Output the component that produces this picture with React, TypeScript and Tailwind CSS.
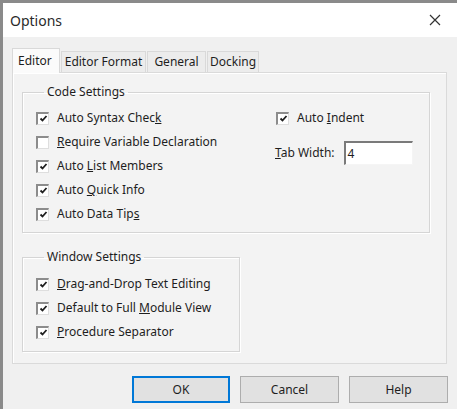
import React from "react";

const Check = ({ checked = true }: { checked?: boolean }) => (
  <span className="w-[13px] h-[13px] shrink-0 bg-white border-t-2 border-l-2 border-r border-b border-t-[#8c8c8c] border-l-[#8c8c8c] border-r-[#dedede] border-b-[#dedede] flex items-center justify-center">
    {checked && (
      <svg width="9" height="9" viewBox="0 0 9 9">
        <path d="M1.5 4.5 L3.5 6.5 L7.5 2" stroke="#1e1e1e" strokeWidth="1.8" fill="none" />
      </svg>
    )}
  </span>
);

const Row = ({ children, checked = true }: { children: React.ReactNode; checked?: boolean }) => (
  <div className="flex items-center gap-[8px] h-[24px]">
    <Check checked={checked} />
    <span className="whitespace-nowrap">{children}</span>
  </div>
);

const Btn = ({ label, primary }: { label: string; primary?: boolean }) => (
  <button
    className={
      primary
        ? "w-[98px] h-[27px] bg-[#e1e1e1] border border-[#0078d7] shadow-[inset_0_0_0_1px_#0078d7] text-[12px]"
        : "w-[99px] h-[27px] bg-[#e1e1e1] border border-[#adadad] text-[12px]"
    }
  >
    {label}
  </button>
);

export default function App() {
  return (
    <div
      className="w-[457px] h-[409px] overflow-hidden bg-[#f0f0f0] border-t-[3px] border-l-[3px] border-[#8a8a8a] text-[12px] text-[#1e1e1e] flex flex-col"
      style={{ fontFamily: '"Noto Sans", "Open Sans", sans-serif' }}
    >
      <div className="h-[34px] bg-white flex items-center justify-between pl-[7px] pr-[16px] shrink-0">
        <span className="text-[14px] text-[#2a2a2a]">Options</span>
        <svg width="12" height="12" viewBox="0 0 12 12">
          <path d="M1 1 L11 11 M11 1 L1 11" stroke="#333" strokeWidth="1.2" />
        </svg>
      </div>
      <div className="pl-[9px] pt-[11px] flex flex-col">
        <div className="flex items-end">
          <div className="h-[25px] w-[48px] px-[5px] flex items-center bg-[#fbfbfb] border border-b-0 border-[#d9d9d9] -mb-px relative z-10">
            Editor
          </div>
          <div className="h-[21px] w-[85px] ml-px flex items-center justify-center bg-[#ececec] border border-b-0 border-[#d9d9d9] whitespace-nowrap">
            Editor Format
          </div>
          <div className="h-[21px] w-[59px] ml-px flex items-center justify-center bg-[#ececec] border border-b-0 border-[#d9d9d9]">
            General
          </div>
          <div className="h-[21px] w-[52px] ml-px flex items-center justify-center bg-[#ececec] border border-b-0 border-[#d9d9d9]">
            Docking
          </div>
        </div>
        <div className="w-[435px] h-[292px] bg-[#f3f3f3] border border-[#dadada] shadow-[inset_1px_1px_0_#ffffff] pt-[11px] pl-[9px]">
          <fieldset className="w-[408px] border border-[#d5d5d5] shadow-[inset_1px_1px_0_#ffffff,1px_1px_0_#ffffff] pl-[13px] pr-[10px] pb-[6px]">
            <legend className="ml-[8px] px-[3px] leading-[16px]">Code Settings</legend>
            <div className="flex pt-[6px]">
              <div className="w-[240px] flex flex-col">
                <Row>
                  Auto Syntax Chec<u>k</u>
                </Row>
                <Row checked={false}>
                  <u>R</u>equire Variable Declaration
                </Row>
                <Row>
                  Auto <u>L</u>ist Members
                </Row>
                <Row>
                  Auto <u>Q</u>uick Info
                </Row>
                <Row>
                  Auto Data Tip<u>s</u>
                </Row>
              </div>
              <div className="flex flex-col">
                <Row>
                  Auto <u>I</u>ndent
                </Row>
                <div className="flex items-center mt-[11px] -ml-px">
                  <span className="whitespace-nowrap">
                    <u>T</u>ab Width:
                  </span>
                  <div className="ml-[9px] w-[69px] h-[24px] bg-white border-t-2 border-l-2 border-r border-b border-t-[#7a7a7a] border-l-[#7a7a7a] border-r-[#f5f5f5] border-b-[#f5f5f5] flex items-center pl-[2px]">
                    4
                  </div>
                </div>
              </div>
            </div>
          </fieldset>
          <fieldset className="w-[218px] mt-[16px] border border-[#d5d5d5] shadow-[inset_1px_1px_0_#ffffff,1px_1px_0_#ffffff] pl-[13px] pb-[7px]">
            <legend className="ml-[8px] px-[3px] leading-[16px]">Window Settings</legend>
            <div className="flex flex-col pt-[7px]">
              <Row>
                <u>D</u>rag-and-Drop Text Editing
              </Row>
              <Row>
                Default to Full <u>M</u>odule View
              </Row>
              <Row>
                <u>P</u>rocedure Separator
              </Row>
            </div>
          </fieldset>
        </div>
        <div className="flex justify-end gap-[10px] mt-[12px] pr-[9px] w-[445px]">
          <Btn label="OK" primary />
          <Btn label="Cancel" />
          <Btn label="Help" />
        </div>
      </div>
    </div>
  );
}
